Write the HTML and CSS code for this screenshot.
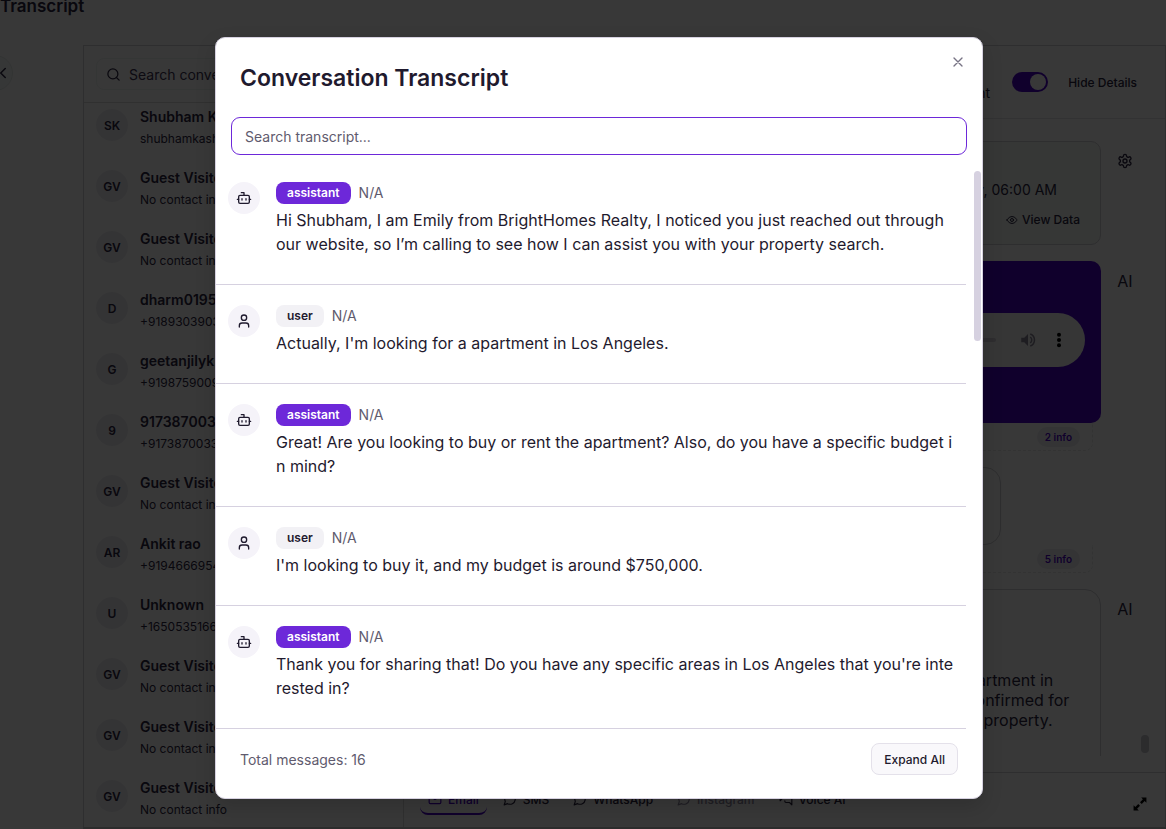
FILE: index.html
```html
<!DOCTYPE html>
<html lang="en">
<head>
    <meta charset="UTF-8">
    <meta name="viewport" content="width=device-width, initial-scale=1.0">
    <title>Conversation Transcript</title>
    <link rel="stylesheet" href="styles.css">
</head>
<body>
    <svg class="sprite" aria-hidden="true">
        <symbol id="bot" viewBox="0 0 24 24"><path d="M12 8V4H8"/><rect width="16" height="12" x="4" y="8" rx="2"/><path d="M2 14h2M20 14h2M15 13v2M9 13v2"/></symbol>
        <symbol id="user" viewBox="0 0 24 24"><path d="M19 21v-2a4 4 0 0 0-4-4H9a4 4 0 0 0-4 4v2"/><circle cx="12" cy="7" r="4"/></symbol>
        <symbol id="chat" viewBox="0 0 24 24"><path d="M7.9 20A9 9 0 1 0 4 16.1L2 22Z"/></symbol>
    </svg>

    <div class="page">
        <header class="page-header">
            <h1>Transcript</h1>
        </header>

        <div class="page-body">
            <div class="rail">
                <button class="collapse" aria-label="Collapse menu">
                    <svg class="icon" viewBox="0 0 24 24"><path d="m15 18-6-6 6-6"/></svg>
                </button>
            </div>

            <div class="workspace">
                <aside class="sidebar">
                    <div class="sidebar-search">
                        <label class="search-box">
                            <svg class="icon" viewBox="0 0 24 24"><circle cx="11" cy="11" r="8"/><path d="m21 21-4.3-4.3"/></svg>
                            <input type="text" placeholder="Search conversations" aria-label="Search conversations">
                        </label>
                    </div>
                    <ul class="contacts">
                        <li><span class="avatar">SK</span><div><strong>Shubham K</strong><small>shubhamkash</small></div></li>
                        <li><span class="avatar">GV</span><div><strong>Guest Visitor</strong><small>No contact info</small></div></li>
                        <li><span class="avatar">GV</span><div><strong>Guest Visitor</strong><small>No contact info</small></div></li>
                        <li><span class="avatar">D</span><div><strong>dharm0195</strong><small>+9189303903</small></div></li>
                        <li><span class="avatar">G</span><div><strong>geetanjilyk</strong><small>+9198759009</small></div></li>
                        <li><span class="avatar">9</span><div><strong>9173870033</strong><small>+9173870033</small></div></li>
                        <li><span class="avatar">GV</span><div><strong>Guest Visitor</strong><small>No contact info</small></div></li>
                        <li><span class="avatar">AR</span><div><strong>Ankit rao</strong><small>+9194666954</small></div></li>
                        <li><span class="avatar">U</span><div><strong>Unknown</strong><small>+1650535166</small></div></li>
                        <li><span class="avatar">GV</span><div><strong>Guest Visitor</strong><small>No contact info</small></div></li>
                        <li><span class="avatar">GV</span><div><strong>Guest Visitor</strong><small>No contact info</small></div></li>
                        <li><span class="avatar">GV</span><div><strong>Guest Visitor</strong><small>No contact info</small></div></li>
                    </ul>
                </aside>

                <main class="chat">
                    <div class="chat-header">
                        <span class="agent">AI Agent</span>
                        <input class="switch" type="checkbox" id="details" checked>
                        <label for="details">Hide Details</label>
                    </div>

                    <div class="chat-body">
                        <div class="messages">
                            <div class="entry">
                                <div class="bubble event">
                                    <p>Today, 06:00 AM</p>
                                    <button class="view-data">
                                        <svg class="icon" viewBox="0 0 24 24"><path d="M2 12s3.500-7 10-7 10 7 10 7-3.500 7-10 7-10-7-10-7Z"/><circle cx="12" cy="12" r="3"/></svg>
                                        View Data
                                    </button>
                                </div>
                                <span class="sender">
                                    <svg class="icon gear" viewBox="0 0 24 24"><path d="M12.220 2h-.440a2 2 0 0 0-2 2v.180a2 2 0 0 1-1 1.730l-.430.250a2 2 0 0 1-2 0l-.150-.080a2 2 0 0 0-2.730.730l-.220.380a2 2 0 0 0 .730 2.730l.150.100a2 2 0 0 1 1 1.720v.510a2 2 0 0 1-1 1.740l-.150.090a2 2 0 0 0-.730 2.730l.220.380a2 2 0 0 0 2.730.730l.150-.080a2 2 0 0 1 2 0l.430.250a2 2 0 0 1 1 1.730V20a2 2 0 0 0 2 2h.440a2 2 0 0 0 2-2v-.180a2 2 0 0 1 1-1.730l.430-.250a2 2 0 0 1 2 0l.150.080a2 2 0 0 0 2.730-.730l.220-.390a2 2 0 0 0-.730-2.730l-.150-.080a2 2 0 0 1-1-1.740v-.500a2 2 0 0 1 1-1.740l.150-.090a2 2 0 0 0 .730-2.730l-.220-.380a2 2 0 0 0-2.730-.730l-.150.080a2 2 0 0 1-2 0l-.430-.250a2 2 0 0 1-1-1.730V4a2 2 0 0 0-2-2z"/><circle cx="12" cy="12" r="3"/></svg>
                                </span>
                            </div>

                            <div class="entry">
                                <div class="bubble call">
                                    <div class="player">
                                        <span class="player-track"></span>
                                        <svg class="speaker" viewBox="0 0 24 24"><path d="M3 9v6h4l5 5V4L7 9H3z"/><path class="wave" d="M15 8a5 5 0 0 1 0 8M15 4a8.500 8.500 0 0 1 0 16"/></svg>
                                        <svg class="dots" viewBox="0 0 24 24"><circle cx="12" cy="4" r="3"/><circle cx="12" cy="12" r="3"/><circle cx="12" cy="20" r="3"/></svg>
                                    </div>
                                </div>
                                <span class="sender">AI</span>
                            </div>
                            <div class="meta"><span>2 info</span></div>

                            <div class="bubble reply"></div>
                            <div class="meta"><span>5 info</span></div>

                            <div class="entry">
                                <div class="bubble summary">
                                    <p>an apartment in<br>has confirmed for<br>of the property.</p>
                                </div>
                                <span class="sender">AI</span>
                            </div>
                        </div>
                        <div class="chat-gutter"><span></span></div>
                    </div>

                    <div class="composer">
                        <nav class="channels">
                            <button class="active"><svg class="icon" viewBox="0 0 24 24"><rect width="20" height="16" x="2" y="4" rx="2"/><path d="m22 7-10 6L2 7"/></svg>Email</button>
                            <button><svg class="icon"><use href="#chat"/></svg>SMS</button>
                            <button><svg class="icon"><use href="#chat"/></svg>WhatsApp</button>
                            <button class="muted"><svg class="icon"><use href="#chat"/></svg>Instagram</button>
                            <button><svg class="icon" viewBox="0 0 24 24"><path d="M14 9a2 2 0 0 1-2 2H6l-4 4V4a2 2 0 0 1 2-2h8a2 2 0 0 1 2 2z"/><path d="M18 9h2a2 2 0 0 1 2 2v11l-4-4h-6a2 2 0 0 1-2-2v-1"/></svg>Voice AI</button>
                        </nav>
                        <button class="expand" aria-label="Expand">
                            <svg viewBox="0 0 24 24"><path d="M14 1h9v9l-3-3-5 5-3-3 5-5zM10 23H1v-9l3 3 5-5 3 3-5 5z"/></svg>
                        </button>
                    </div>
                </main>
            </div>
        </div>
    </div>

    <div class="overlay">
        <section class="modal" role="dialog" aria-labelledby="modal-title">
            <header class="modal-header">
                <h2 id="modal-title">Conversation Transcript</h2>
                <button class="close" aria-label="Close">
                    <svg class="icon" viewBox="0 0 24 24"><path d="M18 6 6 18M6 6l12 12"/></svg>
                </button>
            </header>

            <div class="modal-search">
                <input type="text" placeholder="Search transcript..." aria-label="Search transcript">
            </div>

            <div class="transcript">
                <ol class="lines">
                    <li>
                        <span class="role-icon"><svg class="icon"><use href="#bot"/></svg></span>
                        <div>
                            <div class="line-head"><span class="badge assistant">assistant</span><span class="time">N/A</span></div>
                            <p>Hi Shubham, I am Emily from BrightHomes Realty, I noticed you just reached out through our website, so I’m calling to see how I can assist you with your property search.</p>
                        </div>
                    </li>
                    <li>
                        <span class="role-icon"><svg class="icon"><use href="#user"/></svg></span>
                        <div>
                            <div class="line-head"><span class="badge">user</span><span class="time">N/A</span></div>
                            <p>Actually, I'm looking for a apartment in Los Angeles.</p>
                        </div>
                    </li>
                    <li>
                        <span class="role-icon"><svg class="icon"><use href="#bot"/></svg></span>
                        <div>
                            <div class="line-head"><span class="badge assistant">assistant</span><span class="time">N/A</span></div>
                            <p>Great! Are you looking to buy or rent the apartment? Also, do you have a specific budget in mind?</p>
                        </div>
                    </li>
                    <li>
                        <span class="role-icon"><svg class="icon"><use href="#user"/></svg></span>
                        <div>
                            <div class="line-head"><span class="badge">user</span><span class="time">N/A</span></div>
                            <p>I'm looking to buy it, and my budget is around $750,000.</p>
                        </div>
                    </li>
                    <li>
                        <span class="role-icon"><svg class="icon"><use href="#bot"/></svg></span>
                        <div>
                            <div class="line-head"><span class="badge assistant">assistant</span><span class="time">N/A</span></div>
                            <p>Thank you for sharing that! Do you have any specific areas in Los Angeles that you're interested in?</p>
                        </div>
                    </li>
                </ol>
                <div class="gutter"><span></span></div>
            </div>

            <footer class="modal-footer">
                <span>Total messages: 16</span>
                <button>Expand All</button>
            </footer>
        </section>
    </div>
</body>
</html>
```
FILE: styles.css
```css
* {
    box-sizing: border-box;
}
body {
    margin: 0;
    font-family: Inter, "Liberation Sans", sans-serif;
    color: #1f1a2e;
    background: #fff;
    overflow: hidden;
}
button, input {
    font: inherit;
    color: inherit;
}
button {
    padding: 0;
    border: 0;
    background: none;
}
h1, h2, p, ul, ol {
    margin: 0;
    padding: 0;
    list-style: none;
}
.sprite {
    display: none;
}
.icon {
    flex: none;
    fill: none;
    stroke: currentColor;
    stroke-width: 2;
    stroke-linecap: round;
    stroke-linejoin: round;
}

/* Page behind the dialog */
.page {
    display: flex;
    flex-direction: column;
    height: 100vh;
    color: #2c2542;
}
.page-header {
    height: 45px;
    flex: none;
}
.page-header h1 {
    font-size: 17px;
    line-height: 12px;
    font-weight: 600;
}
.page-body {
    display: flex;
    flex: 1;
    min-height: 0;
}
.rail {
    width: 83px;
    flex: none;
    padding-top: 10px;
}
.collapse {
    display: flex;
    align-items: center;
    justify-content: flex-end;
    width: 36px;
    height: 36px;
    margin-left: -23px;
    border: 1px solid #e4eae9;
    border-radius: 50%;
    background: #f6fbfa;
}
.collapse svg {
    width: 18px;
    height: 18px;
}
.workspace {
    display: flex;
    flex: 1;
    min-width: 0;
    border: 1px solid #d0d0d4;
    border-bottom: 2px solid #c8c8c8;
}
.sidebar {
    width: 320px;
    flex: none;
    border-right: 1px solid #d8d8dc;
    overflow: hidden;
}
.sidebar-search {
    padding: 12px;
    border-bottom: 1px solid #d8d8dc;
}
.search-box {
    display: flex;
    align-items: center;
    gap: 8px;
    height: 32px;
    padding: 0 9px;
    border: 1px solid #eef3f2;
    border-radius: 8px;
}
.search-box svg {
    width: 15px;
    height: 15px;
}
.search-box input {
    flex: 1;
    min-width: 0;
    padding: 0;
    border: 0;
    background: none;
    font-size: 14px;
}
.search-box input::placeholder {
    color: #3c3454;
}
.contacts {
    padding-top: 4px;
}
.contacts li {
    display: flex;
    gap: 12px;
    height: 61px;
    padding: 0 12px;
}
.avatar {
    display: grid;
    place-items: center;
    width: 32px;
    height: 32px;
    margin-top: 2px;
    border-radius: 50%;
    background: #eeedf2;
    font-size: 12px;
    font-weight: 600;
}
.contacts strong, .contacts small {
    display: block;
    white-space: nowrap;
}
.contacts strong {
    font-size: 14px;
    line-height: 20px;
    font-weight: 600;
}
.contacts small {
    font-size: 12px;
    line-height: 24px;
}
.chat {
    display: flex;
    flex-direction: column;
    flex: 1;
    min-width: 0;
}
.chat-header {
    display: flex;
    align-items: center;
    justify-content: flex-end;
    height: 73px;
    flex: none;
    padding-right: 28px;
    border-bottom: 1px solid #e2e2e6;
    font-size: 12px;
    font-weight: 500;
}
.agent {
    align-self: flex-end;
    margin: 0 22px 17px 0;
    font-size: 14px;
    font-weight: 400;
}
.switch {
    appearance: none;
    display: flex;
    width: 36px;
    height: 20px;
    margin: 0 20px 0 0;
    padding: 2px;
    border-radius: 10px;
    background: #4a00c8;
}
.switch::before {
    content: "";
    width: 16px;
    height: 16px;
    margin-left: auto;
    border-radius: 50%;
    background: #fff;
}
.chat-body {
    display: flex;
    flex: 1;
    min-height: 0;
    padding: 22px 16px 16px;
}
.messages {
    flex: 1;
    min-width: 0;
    overflow: hidden;
}
.entry {
    display: flex;
    gap: 8px;
}
.bubble {
    flex: 1;
    border: 1px solid #cfcfd4;
    border-radius: 10px;
}
.sender {
    display: grid;
    place-items: center;
    width: 32px;
    height: 40px;
    font-size: 16px;
}
.sender .icon {
    width: 16px;
    height: 16px;
}
.event {
    display: flex;
    flex-direction: column;
    align-items: flex-end;
    height: 104px;
    margin-bottom: 16px;
    padding-top: 36px;
    background: #f5faf7;
}
.event p {
    margin-right: 43px;
    font-size: 14px;
    line-height: 24px;
}
.view-data {
    display: flex;
    align-items: center;
    gap: 4px;
    margin: 8px 20px 0 0;
    font-size: 12px;
    line-height: 20px;
    font-weight: 500;
}
.view-data svg {
    width: 12px;
    height: 12px;
}
.call {
    height: 162px;
    padding: 52px 16px;
    border: 0;
    background: #4a00c8;
}
.player {
    display: flex;
    align-items: center;
    justify-content: flex-end;
    height: 54px;
    padding-right: 18px;
    border-radius: 27px;
    background: #f3f6f4;
}
.player-track {
    width: 160px;
    height: 4px;
    margin-right: 23px;
    border-radius: 2px;
    background: #d0ccd6;
}
.speaker {
    width: 18px;
    height: 18px;
    margin-right: 14px;
    fill: #8b8398;
}
.speaker .wave {
    fill: none;
    stroke: #8b8398;
    stroke-width: 2;
}
.dots {
    width: 16px;
    height: 16px;
}
.meta {
    display: flex;
    justify-content: flex-end;
    height: 28px;
    margin-right: 48px;
    padding: 4px 12px;
    border: 1px dashed #e6e9e8;
    border-top: 0;
    border-radius: 0 0 8px 8px;
}
.meta span {
    height: 20px;
    padding: 0 8px;
    border-radius: 10px;
    background: #eeedf2;
    color: #4a00c8;
    font-size: 10px;
    line-height: 20px;
    font-weight: 600;
}
.reply {
    height: 78px;
    margin: 16px 140px 0 0;
    border-radius: 16px;
}
.summary {
    display: flex;
    justify-content: flex-end;
    height: 200px;
    margin-top: 16px;
    padding: 80px 0 0;
    border-radius: 16px;
}
.summary p {
    width: 165px;
    font-size: 16px;
    line-height: 20px;
}
.summary + .sender {
    margin-top: 16px;
}
.chat-gutter {
    display: flex;
    align-items: flex-end;
    width: 8px;
}
.chat-gutter span {
    width: 8px;
    height: 18px;
    margin-bottom: 3px;
    border-radius: 4px;
    background: #c6c6cc;
}
.composer {
    display: flex;
    justify-content: space-between;
    height: 55px;
    flex: none;
    padding: 12px 18px 0 16px;
    border-top: 1px solid #d0d0d4;
}
.channels {
    display: flex;
    gap: 8px;
    height: 30px;
}
.channels button {
    display: flex;
    align-items: center;
    gap: 6px;
    padding: 0 8px;
    border-bottom: 2px solid transparent;
    border-radius: 8px;
    font-size: 12px;
    font-weight: 500;
}
.channels svg {
    width: 14px;
    height: 14px;
}
.channels .active {
    border-color: #4a00c8;
    color: #4a00c8;
}
.channels .muted {
    color: #8f88a0;
}
.expand {
    align-self: flex-start;
    height: 40px;
}
.expand svg {
    width: 14px;
    height: 14px;
}

/* Dialog */
.overlay {
    position: absolute;
    inset: 0;
    display: flex;
    justify-content: center;
    padding: 37px 0 30px 32px;
    background: rgba(0, 0, 0, 0.78);
}
.modal {
    display: flex;
    flex-direction: column;
    width: 768px;
    border: 1px solid #d6d1e0;
    border-radius: 10px;
    background: #fff;
    box-shadow: 0 8px 20px rgba(0, 0, 0, 0.15);
}
.modal-header {
    display: flex;
    justify-content: space-between;
    align-items: flex-start;
    padding: 24px 16px 23px 24px;
}
.modal-header h2 {
    font-size: 23px;
    line-height: 32px;
    font-weight: 600;
}
.close {
    display: flex;
    margin-top: -8px;
    color: #777384;
}
.close svg {
    width: 16px;
    height: 16px;
}
.modal-search {
    padding: 0 15px;
}
.modal-search input {
    display: block;
    width: 100%;
    height: 38px;
    padding: 1px 13px 0;
    border: 1px solid #6d28d9;
    border-radius: 9px;
    outline: none;
    background: #fff;
    font-size: 14px;
}
.modal-search input::placeholder {
    color: #5f5b6e;
}
.transcript {
    display: flex;
    flex: 1;
    min-height: 0;
    padding-top: 7px;
}
.lines {
    flex: 1;
    min-width: 0;
    overflow-y: auto;
    scrollbar-width: none;
}
.lines li {
    display: flex;
    gap: 16px;
    padding: 20px 12px 28px;
    border-bottom: 1px solid #d6d1e0;
}
.role-icon {
    display: grid;
    place-items: center;
    width: 32px;
    height: 32px;
    flex: none;
    border-radius: 50%;
    background: #f5f3f9;
}
.role-icon svg {
    width: 16px;
    height: 16px;
}
.line-head {
    display: flex;
    align-items: center;
    gap: 8px;
    margin-bottom: 4px;
}
.badge {
    padding: 0 11px;
    border-radius: 8px;
    background: #f2f1f5;
    font-size: 12px;
    line-height: 22px;
    font-weight: 600;
}
.badge.assistant {
    background: #6d28d9;
    color: #fff;
}
.time {
    color: #5f5b6e;
    font-size: 14px;
    line-height: 20px;
}
.lines p {
    font-size: 16px;
    line-height: 24px;
    word-break: break-all;
}
.gutter {
    width: 16px;
    padding: 9px 1px 0 8px;
}
.gutter span {
    display: block;
    height: 170px;
    border-radius: 4px;
    background: #d6d1e0;
}
.modal-footer {
    display: flex;
    justify-content: space-between;
    align-items: center;
    padding: 14px 24px 23px;
    color: #5f5b6e;
    font-size: 14px;
}
.modal-footer button {
    height: 32px;
    padding: 0 12px;
    border: 1px solid #e4e1ea;
    border-radius: 8px;
    background: #f9f8fb;
    color: #1f1a2e;
    font-size: 12px;
    font-weight: 500;
}
```
